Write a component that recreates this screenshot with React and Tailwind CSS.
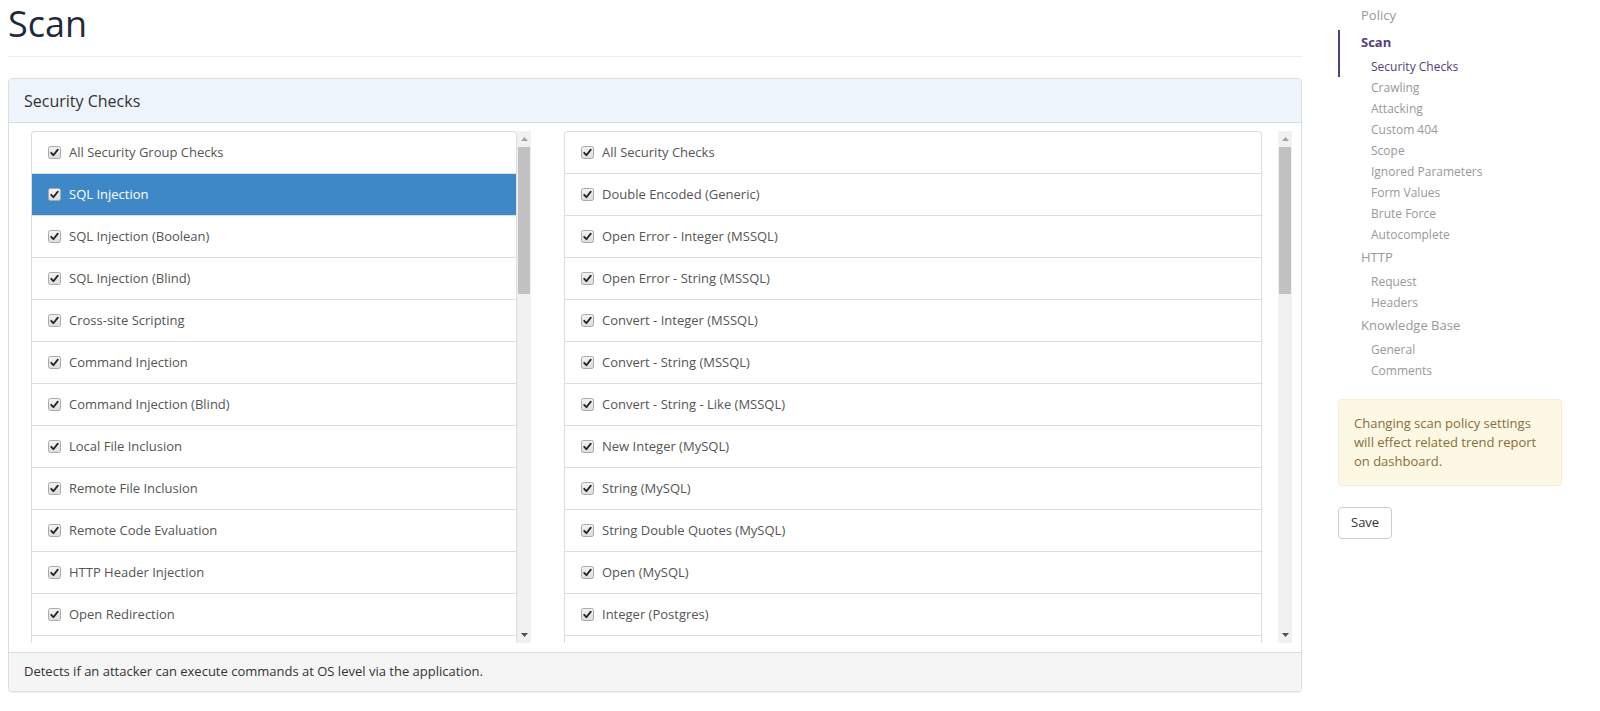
import React from 'react';

const leftChecks = [
  'All Security Group Checks',
  'SQL Injection',
  'SQL Injection (Boolean)',
  'SQL Injection (Blind)',
  'Cross-site Scripting',
  'Command Injection',
  'Command Injection (Blind)',
  'Local File Inclusion',
  'Remote File Inclusion',
  'Remote Code Evaluation',
  'HTTP Header Injection',
  'Open Redirection',
];

const rightChecks = [
  'All Security Checks',
  'Double Encoded (Generic)',
  'Open Error - Integer (MSSQL)',
  'Open Error - String (MSSQL)',
  'Convert - Integer (MSSQL)',
  'Convert - String (MSSQL)',
  'Convert - String - Like (MSSQL)',
  'New Integer (MySQL)',
  'String (MySQL)',
  'String Double Quotes (MySQL)',
  'Open (MySQL)',
  'Integer (Postgres)',
];

const navItems = [
  { label: 'Policy', level: 0 },
  { label: 'Scan', level: 0, active: true },
  { label: 'Security Checks', level: 1, active: true },
  { label: 'Crawling', level: 1 },
  { label: 'Attacking', level: 1 },
  { label: 'Custom 404', level: 1 },
  { label: 'Scope', level: 1 },
  { label: 'Ignored Parameters', level: 1 },
  { label: 'Form Values', level: 1 },
  { label: 'Brute Force', level: 1 },
  { label: 'Autocomplete', level: 1 },
  { label: 'HTTP', level: 0 },
  { label: 'Request', level: 1 },
  { label: 'Headers', level: 1 },
  { label: 'Knowledge Base', level: 0 },
  { label: 'General', level: 1 },
  { label: 'Comments', level: 1 },
];

// Old-style grey checkbox with a black tick
const CheckBox = () => (
  <svg width="13" height="13" viewBox="0 0 13 13" className="shrink-0">
    <defs>
      <linearGradient id="cbg" x1="0" y1="0" x2="0" y2="1">
        <stop offset="0" stopColor="#f4f4f4" />
        <stop offset="1" stopColor="#dcdcdc" />
      </linearGradient>
    </defs>
    <rect x="0.5" y="0.5" width="12" height="12" rx="2" fill="url(#cbg)" stroke="#a9a9a9" />
    <path d="M3.2 6.8 L5.4 9.2 L9.8 3.6" fill="none" stroke="#222" strokeWidth="1.8" strokeLinecap="round" strokeLinejoin="round" />
  </svg>
);

const ScrollBar = () => (
  <div className="w-[14px] h-full bg-[#f1f1f1] flex flex-col items-center shrink-0">
    <div className="h-[16px] flex items-center justify-center">
      <svg width="7" height="4" viewBox="0 0 7 4"><path d="M0 4 L3.5 0 L7 4 Z" fill="#a3a3a3" /></svg>
    </div>
    <div className="w-[12px] h-[147px] bg-[#c1c1c1]" />
    <div className="flex-1" />
    <div className="h-[16px] flex items-center justify-center">
      <svg width="7" height="4" viewBox="0 0 7 4"><path d="M0 0 L3.5 4 L7 0 Z" fill="#505050" /></svg>
    </div>
  </div>
);

const CheckList = ({ items, selected, width }) => (
  <div className={`${width} shrink-0 h-full overflow-hidden border border-b-0 border-[#dddddd] rounded-t-[4px] bg-white`}>
    {items.map((item, i) => (
      <div
        key={item}
        className={`h-[42px] flex items-center gap-2 pl-4 border-b border-[#dddddd] text-[13px] ${
          i === selected ? 'bg-[#3f88c7] text-white border-[#3f88c7]' : 'text-[#555555]'
        }`}
      >
        <CheckBox />
        <span>{item}</span>
      </div>
    ))}
    {/* next row, scrolled out of view */}
    <div className="h-[42px] border-b border-[#dddddd]" />
  </div>
);

const App = () => {
  return (
    <div className="w-[1600px] h-[711px] bg-white flex font-['Open_Sans',_'Liberation_Sans',_sans-serif] overflow-hidden">
      {/* Main column */}
      <div className="ml-2 w-[1294px] shrink-0 flex flex-col">
        <h1 className="pt-1 text-[36px] leading-[40px] font-normal text-[#1e2a3a]">Scan</h1>
        <div className="mt-3 h-px bg-[#eeeeee]" />

        <div className="mt-[21px] border border-[#dddddd] rounded-[4px] flex flex-col shadow-[0_1px_1px_rgba(0,0,0,0.05)]">
          <div className="h-[44px] bg-[#edf4fb] border-b border-[#dddddd] flex items-center px-[15px] text-[16px] text-[#333333] rounded-t-[4px]">
            Security Checks
          </div>

          <div className="h-[529px] pt-2 pb-[9px] pl-[22px] pr-[9px] flex">
            <div className="flex h-full shrink-0">
              <CheckList items={leftChecks} selected={1} width="w-[486px]" />
              <ScrollBar />
            </div>
            <div className="ml-[33px] flex h-full shrink-0">
              <CheckList items={rightChecks} selected={-1} width="w-[698px]" />
              <div className="ml-4 h-full">
                <ScrollBar />
              </div>
            </div>
          </div>

          <div className="h-[39px] bg-[#f5f5f5] border-t border-[#dddddd] flex items-center px-[15px] text-[13px] text-[#333333] rounded-b-[4px]">
            Detects if an attacker can execute commands at OS level via the application.
          </div>
        </div>
      </div>

      {/* Sidebar */}
      <div className="ml-9 w-[224px] shrink-0 flex flex-col pt-[3px]">
        <nav className="flex flex-col">
          {navItems.map((item) => {
            if (item.level === 0) {
              return (
                <div
                  key={item.label}
                  className={`h-[26px] flex items-center text-[13px] ${
                    item.active
                      ? 'mt-px pl-[21px] border-l-2 border-[#563d7c] font-bold text-[#563d7c]'
                      : 'pl-[23px] text-[#999999]'
                  }`}
                >
                  {item.label}
                </div>
              );
            }
            return (
              <div
                key={item.label}
                className={`h-[21px] flex items-center text-[12px] ${
                  item.active
                    ? 'pl-[31px] border-l-2 border-[#563d7c] text-[#563d7c]'
                    : 'pl-[33px] text-[#999999]'
                }`}
              >
                {item.label}
              </div>
            );
          })}
        </nav>

        <div className="mt-[18px] bg-[#fcf8e3] border border-[#faebcc] rounded-[4px] px-[15px] py-[14px] text-[13px] leading-[19px] text-[#8a6d3b]">
          Changing scan policy settings will effect related trend report on dashboard.
        </div>

        <div className="mt-[21px]">
          <button className="h-[32px] px-3 bg-white border border-[#cccccc] rounded-[4px] text-[13px] text-[#333333]">
            Save
          </button>
        </div>
      </div>
    </div>
  );
};

export default App;
